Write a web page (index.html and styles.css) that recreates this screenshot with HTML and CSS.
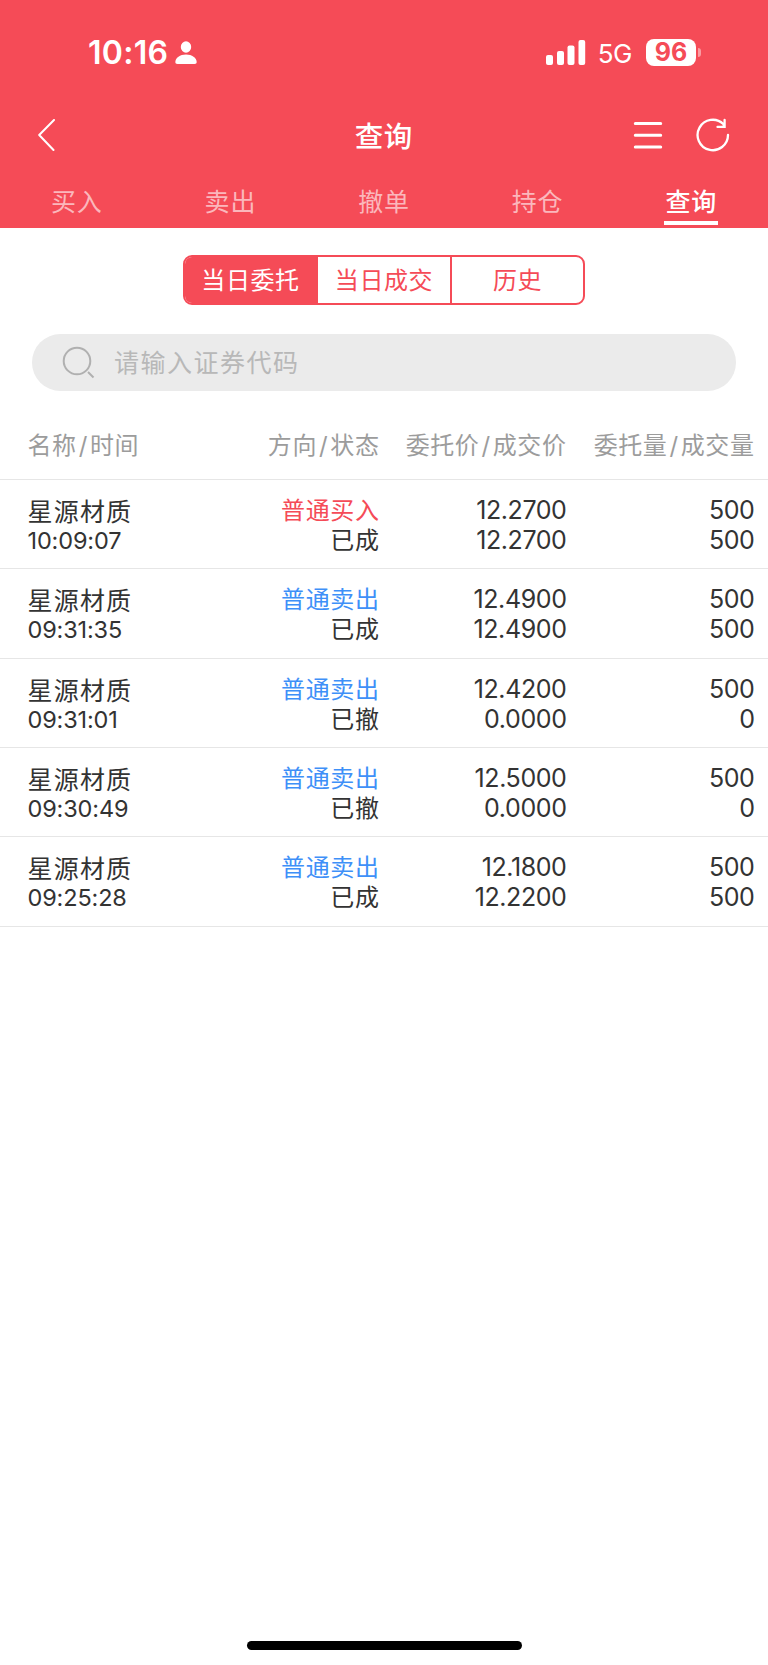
FILE: index.html
```html
<!DOCTYPE html>
<html lang="zh-CN">
<head>
    <meta charset="UTF-8">
    <title>查询</title>
    <link rel="stylesheet" href="styles.css">
</head>
<body>

    <div class="header">
        <!-- Status bar -->
        <div class="status-bar">
            <span class="clock">10:16</span>
            <svg class="person" width="22" height="24" viewBox="0 0 22 24" fill="#fff">
                <ellipse cx="11" cy="6" rx="5.2" ry="5.8"/>
                <path d="M2.5 23C1 23 .3 22.300 .3 21C.5 17 5 13.600 11 13.600S21.500 17 21.700 21C21.700 22.300 21 23 19.500 23Z"/>
            </svg>
            <svg class="signal" width="40" height="25" viewBox="0 0 40 25" fill="#fff">
                <rect x="0" y="15" width="7" height="10" rx="2"/>
                <rect x="11" y="11" width="7" height="14" rx="2"/>
                <rect x="21.500" y="5.500" width="7" height="19.500" rx="2"/>
                <rect x="32.500" y="0" width="6.700" height="25" rx="2"/>
            </svg>
            <span class="network">5G</span>
            <span class="battery">96</span>
            <span class="battery-tip"></span>
        </div>

        <!-- Title bar -->
        <div class="nav-bar">
            <svg class="back" width="18" height="32" viewBox="0 0 18 32" fill="none" stroke="#fff" stroke-width="2" stroke-linecap="round" stroke-linejoin="round">
                <path d="M16 1L1.200 16L15.500 31"/>
            </svg>
            <h1>查询</h1>
            <div class="actions">
                <svg width="30" height="32" viewBox="0 0 30 32" fill="none" stroke="#fff" stroke-width="3" stroke-linecap="round">
                    <path d="M2.300 4.500H27.700M2.300 16.300H27.700M2.300 28H27.700"/>
                </svg>
                <svg width="34" height="34" viewBox="0 0 34 34" fill="none" stroke="#fff" stroke-width="2.300" stroke-linecap="round">
                    <path d="M32 17A15.200 15.200 0 1 1 27.300 6L28.300 8.500M28.600 2V8.900H21.500"/>
                </svg>
            </div>
        </div>

        <div class="tabs">
            <span class="tab">买入</span>
            <span class="tab">卖出</span>
            <span class="tab">撤单</span>
            <span class="tab">持仓</span>
            <span class="tab active">查询</span>
        </div>
    </div>

    <div class="segment">
        <span class="active">当日委托</span>
        <span>当日成交</span>
        <span>历史</span>
    </div>

    <div class="search">
        <svg width="33" height="33" viewBox="0 0 33 33" fill="none" stroke="#b0b0b0" stroke-width="2">
            <circle cx="15" cy="15" r="13.300"/>
            <path d="M26 26L31.500 31.500"/>
        </svg>
        <span>请输入证券代码</span>
    </div>

    <!-- Orders -->
    <div class="table">
        <div class="row head">
            <div>名称<i>/</i>时间</div>
            <div>方向<i>/</i>状态</div>
            <div>委托价<i>/</i>成交价</div>
            <div>委托量<i>/</i>成交量</div>
        </div>
        <div class="row">
            <div class="stock"><p>星源材质</p><p class="time">10:09:07</p></div>
            <div><p class="buy">普通买入</p><p>已成</p></div>
            <div class="num"><p>12.2700</p><p>12.2700</p></div>
            <div class="num"><p>500</p><p>500</p></div>
        </div>
        <div class="row">
            <div class="stock"><p>星源材质</p><p class="time">09:31:35</p></div>
            <div><p class="sell">普通卖出</p><p>已成</p></div>
            <div class="num"><p>12.4900</p><p>12.4900</p></div>
            <div class="num"><p>500</p><p>500</p></div>
        </div>
        <div class="row">
            <div class="stock"><p>星源材质</p><p class="time">09:31:01</p></div>
            <div><p class="sell">普通卖出</p><p>已撤</p></div>
            <div class="num"><p>12.4200</p><p>0.0000</p></div>
            <div class="num"><p>500</p><p>0</p></div>
        </div>
        <div class="row">
            <div class="stock"><p>星源材质</p><p class="time">09:30:49</p></div>
            <div><p class="sell">普通卖出</p><p>已撤</p></div>
            <div class="num"><p>12.5000</p><p>0.0000</p></div>
            <div class="num"><p>500</p><p>0</p></div>
        </div>
        <div class="row">
            <div class="stock"><p>星源材质</p><p class="time">09:25:28</p></div>
            <div><p class="sell">普通卖出</p><p>已成</p></div>
            <div class="num"><p>12.1800</p><p>12.2200</p></div>
            <div class="num"><p>500</p><p>500</p></div>
        </div>
    </div>

    <div class="home-indicator"></div>

</body>
</html>
```

FILE: styles.css
```css
* {
    box-sizing: border-box;
}

body {
    margin: 0;
    height: 1665px;
    display: flex;
    flex-direction: column;
    background-color: #fff;
    color: #333;
    font-family: Inter, "Noto Sans CJK SC", sans-serif;
    font-size: 24px;
}

p {
    margin: 0;
}

/* --- Header --- */
.header {
    height: 228px;
    background-color: #f54b57;
    color: #fff;
}

.status-bar {
    height: 104px;
    padding: 0 67px 0 88px;
    display: flex;
    align-items: center;
}

.clock {
    margin-top: 1px;
    font-size: 32px;
    font-weight: 600;
    letter-spacing: 0.3px;
}

.person {
    margin-left: 7px;
    margin-top: 2px;
}

.signal {
    margin-left: auto;
}

.network {
    margin-left: 12px;
    margin-top: 2px;
    font-size: 26px;
    letter-spacing: -0.5px;
}

.battery {
    width: 50px;
    height: 27px;
    margin-left: 14px;
    margin-right: 1px;
    border-radius: 8px;
    background-color: #fff;
    color: #f54b57;
    font-size: 25px;
    font-weight: 700;
    line-height: 27px;
    text-align: center;
}

.battery-tip {
    width: 3px;
    height: 9px;
    margin-left: 1px;
    border-radius: 0 3px 3px 0;
    background-color: #fa9ca3;
}

.nav-bar {
    height: 62px;
    padding: 0 38.5px 0 38px;
    display: grid;
    grid-template-columns: 1fr auto 1fr;
    align-items: center;
}

.nav-bar h1 {
    margin: 0 0 2px;
    font-size: 28.5px;
    font-weight: 500;
    letter-spacing: 0.5px;
}

.actions {
    display: flex;
    align-items: center;
    justify-content: flex-end;
    gap: 33px;
}

.tabs {
    height: 62px;
    display: grid;
    grid-template-columns: repeat(5, 1fr);
    justify-items: center;
}

.tab {
    width: 54px;
    height: 59px;
    border-bottom: 4px solid transparent;
    color: #fbb7bc;
    font-size: 25px;
    letter-spacing: 0.8px;
    line-height: 72px;
    text-align: center;
    white-space: nowrap;
}

.tab.active {
    color: #fff;
    border-color: #fff;
    font-weight: 500;
}

/* --- Segmented control --- */
.segment {
    width: 402px;
    height: 50px;
    margin: 27px auto 0;
    display: grid;
    grid-template-columns: 133px 132px 133px;
    border: 2px solid #f54b57;
    border-radius: 9px;
    overflow: hidden;
    color: #f54b57;
    letter-spacing: 0.6px;
    line-height: 48px;
    text-align: center;
}

.segment span:last-child {
    border-left: 2px solid #f54b57;
}

.segment .active {
    padding-right: 2px;
    background-color: #f54b57;
    color: #fff;
}

/* --- Search --- */
.search {
    height: 57px;
    margin: 29px 32px 0;
    padding-left: 30px;
    display: flex;
    align-items: center;
    gap: 19px;
    border-radius: 29px;
    background-color: #ebebeb;
    color: #b8b8b8;
    font-size: 25px;
    letter-spacing: 1.5px;
}

.search span {
    margin-bottom: 3px;
}

/* --- Table --- */
.row {
    height: 89.3px;
    padding: 16px 13.5px 0 27.5px;
    display: grid;
    grid-template-columns: 160px 192px 187px 1fr;
    border-bottom: 1px solid #e6e6e6;
    line-height: 30px;
    letter-spacing: 0.6px;
    text-align: right;
    white-space: nowrap;
}

.row > div:first-child {
    text-align: left;
}

.row.head {
    height: 89.2px;
    padding-top: 40px;
    color: #9c9c9c;
}

.head i {
    margin: 0 2px;
    font-style: normal;
}

.row .num {
    margin-top: -1px;
    font-size: 25px;
    letter-spacing: -0.4px;
}

.stock {
    padding-top: 1px;
    font-size: 25px;
    letter-spacing: 1.2px;
}

.stock .time {
    font-size: 23.5px;
    line-height: 28px;
    letter-spacing: -0.15px;
}

.buy {
    color: #f54b57;
}

.sell {
    color: #3e90f8;
}

/* --- Home indicator --- */
.home-indicator {
    width: 275px;
    height: 9px;
    margin: auto auto 15px;
    border-radius: 5px;
    background-color: #000;
}
```
